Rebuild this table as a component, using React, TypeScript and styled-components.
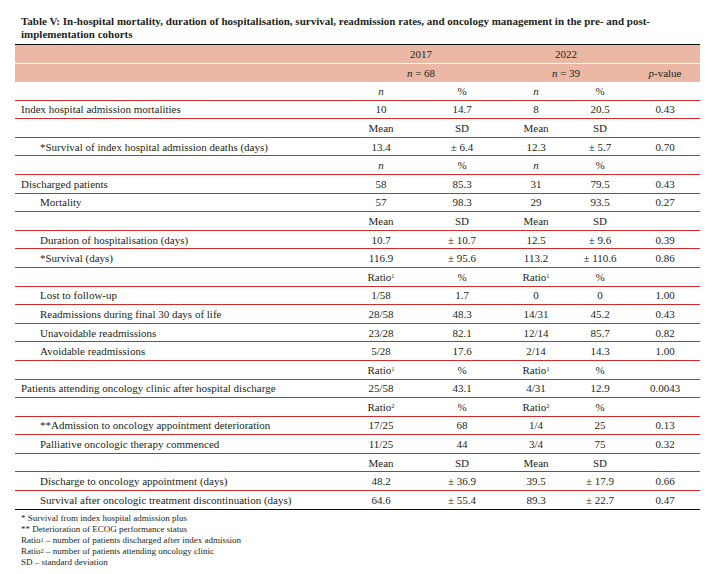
import React from "react";
import styled, { createGlobalStyle } from "styled-components";

const Global = createGlobalStyle`
  html, body { margin: 0; padding: 0; background: #ffffff; }
  body { font-family: "Liberation Serif", "Times New Roman", serif; color: #231f20; }
`;

const Page = styled.div`
  padding: 15px 0 0 15px;
  width: 685px;
`;

const Title = styled.h2`
  margin: 0 0 3px 6px;
  font-size: 11px;
  line-height: 13px;
  font-weight: bold;
`;

const Table = styled.table`
  width: 685px;
  border-collapse: collapse;
  table-layout: fixed;
  font-size: 11px;
  border-top: 1.5px solid #111;
`;

const HeadRow = styled.tr<{ $sep?: boolean }>`
  background: #ecb8a6;
  border-bottom: ${(p) => (p.$sep ? "1px solid #ffffff" : "none")};
`;

const HeadCell = styled.th`
  height: 18px;
  padding: 0;
  font-weight: normal;
  text-align: center;
  vertical-align: middle;
  line-height: 12px;
`;

const Row = styled.tr<{ $last?: boolean }>`
  border-bottom: ${(p) => (p.$last ? "1.5px solid #111" : "1px solid #d42a2a")};
`;

const Label = styled.td<{ $indent?: boolean }>`
  height: 17.6px;
  padding: 0 0 0 ${(p) => (p.$indent ? "25px" : "6px")};
  text-align: left;
  vertical-align: middle;
  line-height: 12px;
  white-space: nowrap;
`;

const Cell = styled.td`
  height: 17.6px;
  padding: 0;
  text-align: center;
  vertical-align: middle;
  line-height: 12px;
  white-space: nowrap;
`;

const Sup = styled.sup`
  font-size: 6.5px;
  vertical-align: top;
  position: relative;
  top: -1px;
`;

const Notes = styled.div`
  margin: 3px 0 0 6px;
  font-size: 9px;
  line-height: 11px;
`;

const N = () => <i>n</i>;

type Cells = React.ReactNode[];

const r1 = <>Ratio<Sup>1</Sup></>;
const r2 = <>Ratio<Sup>2</Sup></>;

const nHead: Cells = [<N />, "%", <N />, "%", ""];
const meanHead: Cells = ["Mean", "SD", "Mean", "SD", ""];
const ratio1Head: Cells = [r1, "%", r1, "%", ""];
const ratio2Head: Cells = [r2, "%", r2, "%", ""];

type RowData = { label?: string; indent?: boolean; cells: Cells };

const rows: RowData[] = [
  { cells: nHead },
  { label: "Index hospital admission mortalities", cells: ["10", "14.7", "8", "20.5", "0.43"] },
  { cells: meanHead },
  { label: "*Survival of index hospital admission deaths (days)", indent: true, cells: ["13.4", "± 6.4", "12.3", "± 5.7", "0.70"] },
  { cells: nHead },
  { label: "Discharged patients", cells: ["58", "85.3", "31", "79.5", "0.43"] },
  { label: "Mortality", indent: true, cells: ["57", "98.3", "29", "93.5", "0.27"] },
  { cells: meanHead },
  { label: "Duration of hospitalisation (days)", indent: true, cells: ["10.7", "± 10.7", "12.5", "± 9.6", "0.39"] },
  { label: "*Survival (days)", indent: true, cells: ["116.9", "± 95.6", "113.2", "± 110.6", "0.86"] },
  { cells: ratio1Head },
  { label: "Lost to follow-up", indent: true, cells: ["1/58", "1.7", "0", "0", "1.00"] },
  { label: "Readmissions during final 30 days of life", indent: true, cells: ["28/58", "48.3", "14/31", "45.2", "0.43"] },
  { label: "Unavoidable readmissions", indent: true, cells: ["23/28", "82.1", "12/14", "85.7", "0.82"] },
  { label: "Avoidable readmissions", indent: true, cells: ["5/28", "17.6", "2/14", "14.3", "1.00"] },
  { cells: ratio1Head },
  { label: "Patients attending oncology clinic after hospital discharge", cells: ["25/58", "43.1", "4/31", "12.9", "0.0043"] },
  { cells: ratio2Head },
  { label: "**Admission to oncology appointment deterioration", indent: true, cells: ["17/25", "68", "1/4", "25", "0.13"] },
  { label: "Palliative oncologic therapy commenced", indent: true, cells: ["11/25", "44", "3/4", "75", "0.32"] },
  { cells: meanHead },
  { label: "Discharge to oncology appointment (days)", indent: true, cells: ["48.2", "± 36.9", "39.5", "± 17.9", "0.66"] },
  { label: "Survival after oncologic treatment discontinuation (days)", indent: true, cells: ["64.6", "± 55.4", "89.3", "± 22.7", "0.47"] },
];

export default function App() {
  return (
    <Page>
      <Global />
      <Title>
        Table V: In-hospital mortality, duration of hospitalisation, survival, readmission rates, and oncology management in the pre- and post-implementation cohorts
      </Title>
      <Table>
        <colgroup>
          <col style={{ width: 325 }} />
          <col style={{ width: 82 }} />
          <col style={{ width: 80 }} />
          <col style={{ width: 68 }} />
          <col style={{ width: 60 }} />
          <col style={{ width: 70 }} />
        </colgroup>
        <thead>
          <HeadRow $sep>
            <HeadCell />
            <HeadCell colSpan={2}>2017</HeadCell>
            <HeadCell colSpan={2}>2022</HeadCell>
            <HeadCell />
          </HeadRow>
          <HeadRow>
            <HeadCell />
            <HeadCell colSpan={2}><i>n</i> = 68</HeadCell>
            <HeadCell colSpan={2}><i>n</i> = 39</HeadCell>
            <HeadCell><i>p</i>-value</HeadCell>
          </HeadRow>
        </thead>
        <tbody>
          {rows.map((row, i) => (
            <Row key={i} $last={i === rows.length - 1}>
              <Label $indent={row.indent}>{row.label ?? ""}</Label>
              {row.cells.map((c, j) => (
                <Cell key={j}>{c}</Cell>
              ))}
            </Row>
          ))}
        </tbody>
      </Table>
      <Notes>
        <div>* Survival from index hospital admission plus</div>
        <div>** Deterioration of ECOG performance status</div>
        <div>Ratio<Sup>1</Sup> – number of patients discharged after index admission</div>
        <div>Ratio<Sup>2</Sup> – number of patients attending oncology clinic</div>
        <div>SD – standard deviation</div>
      </Notes>
    </Page>
  );
}
